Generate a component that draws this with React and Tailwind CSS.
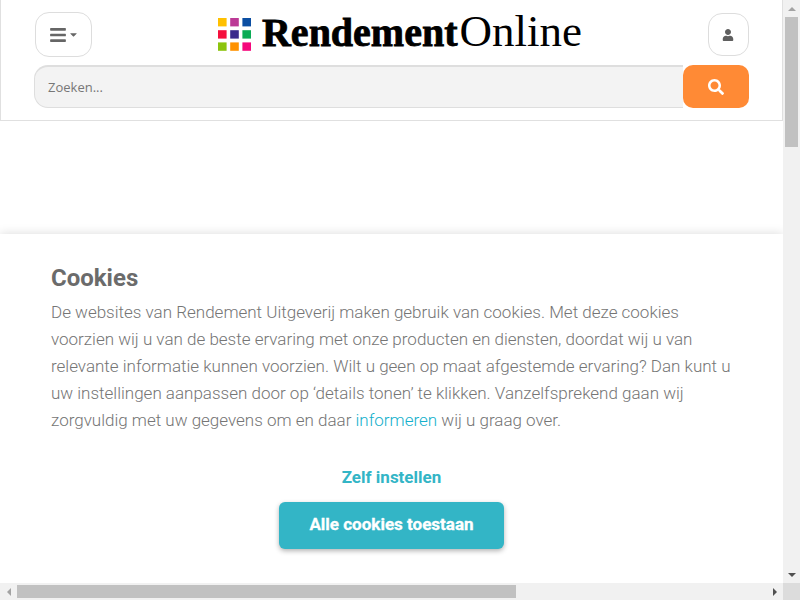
import { FaBars, FaCaretDown, FaSearch, FaUser } from 'react-icons/fa'

const logoColors = ['#ffc000', '#bc3a96', '#0b4ea2', '#f50f3c', '#3b2a8c', '#0bab55', '#8cc40e', '#ff9200', '#f5077c']

function Logo() {
  return (
    <div className="mt-[2px] flex items-center">
      <svg width="33" height="33" viewBox="0 0 33 33" className="mr-[11px] shrink-0">
        {logoColors.map((c, i) => (
          <rect key={c} x={(i % 3) * 12.2} y={Math.floor(i / 3) * 12.2} width="8.6" height="8.4" fill={c} />
        ))}
      </svg>
      <div className="-mt-[5px] flex items-baseline whitespace-nowrap font-['Liberation_Serif',serif] leading-[44px] text-black">
        <span className="text-[40px] font-bold [-webkit-text-stroke:0.8px_black]">Rendement</span>
        <span className="ml-[2px] text-[45px]">Online</span>
      </div>
    </div>
  )
}

function Header() {
  return (
    <header className="h-[121px] shrink-0 border-x border-b border-[#e0e0e0] bg-white pl-[33px] pr-[33px]">
      <div className="flex h-[65px] items-start justify-between pt-3 pl-px">
        <button className="flex h-[45px] w-[57px] items-center justify-center gap-[1px] rounded-[14px] border border-[#dddddd] bg-white text-[#666666]">
          <FaBars className="text-[18px]" />
          <FaCaretDown className="text-[11px]" />
        </button>
        <Logo />
        <button className="mt-px flex h-[43px] w-[41px] items-center justify-center rounded-[14px] border border-[#dddddd] bg-white text-[#5f5f5f]">
          <FaUser className="text-[12px]" />
        </button>
      </div>
      <div className="flex h-[43px] items-stretch">
        <div className="flex flex-1 items-center rounded-l-[14px] border border-[#dedede] border-t-2 border-r-0 bg-[#f3f3f3] pl-[13px] pt-px font-['Open_Sans',sans-serif] text-[13px] text-[#777777]">
          Zoeken...
        </div>
        <button className="flex w-[66px] items-center justify-center rounded-[10px] bg-[#ff8a35] text-white">
          <FaSearch className="text-[16px]" />
        </button>
      </div>
    </header>
  )
}

function CookiePanel() {
  return (
    <section className="h-[349px] shrink-0 bg-white px-[51px] pt-[29px] font-['Roboto',sans-serif] shadow-[0_0_10px_rgba(0,0,0,0.15)]">
      <h1 className="text-[24px] font-bold leading-[30px] text-[#6b6b6b]">Cookies</h1>
      <p className="mt-[6px] w-[690px] text-[17px] font-light leading-[27px] text-[#757575]">
        De websites van Rendement Uitgeverij maken gebruik van cookies. Met deze cookies voorzien wij u van de beste
        ervaring met onze producten en diensten, doordat wij u van relevante informatie kunnen voorzien. Wilt u geen op
        maat afgestemde ervaring? Dan kunt u uw instellingen aanpassen door op ‘details tonen’ te klikken. Vanzelfsprekend
        gaan wij zorgvuldig met uw gegevens om en daar <span className="text-[#14b0cc]">informeren</span> wij u graag over.
      </p>
      <div className="mt-[31px] flex flex-col items-center">
        <button className="h-[24px] text-[17px] font-bold leading-[24px] text-[#33b5c6]">Zelf instellen</button>
        <button className="mt-[13px] h-[47px] w-[225px] rounded-[6px] bg-[#33b5c6] pb-[2px] text-[17px] font-bold text-white shadow-[0_2px_5px_rgba(0,0,0,0.3)] [-webkit-text-stroke:0.3px_white]">
          Alle cookies toestaan
        </button>
      </div>
    </section>
  )
}

function VerticalScrollbar() {
  return (
    <div className="flex w-[17px] shrink-0 flex-col items-center bg-[#f1f1f1]">
      <div className="flex h-[17px] w-full items-center justify-center">
        <div className="h-0 w-0 border-x-[4px] border-b-[4px] border-x-transparent border-b-[#a3a3a3]" />
      </div>
      <div className="h-[130px] w-[13px] bg-[#c1c1c1]" />
      <div className="flex-1" />
      <div className="flex h-[17px] w-full items-center justify-center">
        <div className="h-0 w-0 border-x-[4px] border-t-[4px] border-x-transparent border-t-[#505050]" />
      </div>
    </div>
  )
}

function HorizontalScrollbar() {
  return (
    <div className="flex h-[17px] shrink-0">
      <div className="flex flex-1 items-center bg-[#f1f1f1]">
        <div className="flex h-full w-[17px] items-center justify-center">
          <div className="h-0 w-0 border-y-[4px] border-r-[4px] border-y-transparent border-r-[#a3a3a3]" />
        </div>
        <div className="h-[13px] w-[499px] bg-[#c1c1c1]" />
        <div className="flex-1" />
        <div className="flex h-full w-[17px] items-center justify-center">
          <div className="h-0 w-0 border-y-[4px] border-l-[4px] border-y-transparent border-l-[#505050]" />
        </div>
      </div>
      <div className="w-[17px] bg-[#dcdcdc]" />
    </div>
  )
}

export default function App() {
  return (
    <div className="flex h-[600px] w-[800px] flex-col overflow-hidden bg-white">
      <div className="flex min-h-0 flex-1">
        <div className="flex min-w-0 flex-1 flex-col">
          <Header />
          <div className="flex-1" />
          <CookiePanel />
        </div>
        <VerticalScrollbar />
      </div>
      <HorizontalScrollbar />
    </div>
  )
}
